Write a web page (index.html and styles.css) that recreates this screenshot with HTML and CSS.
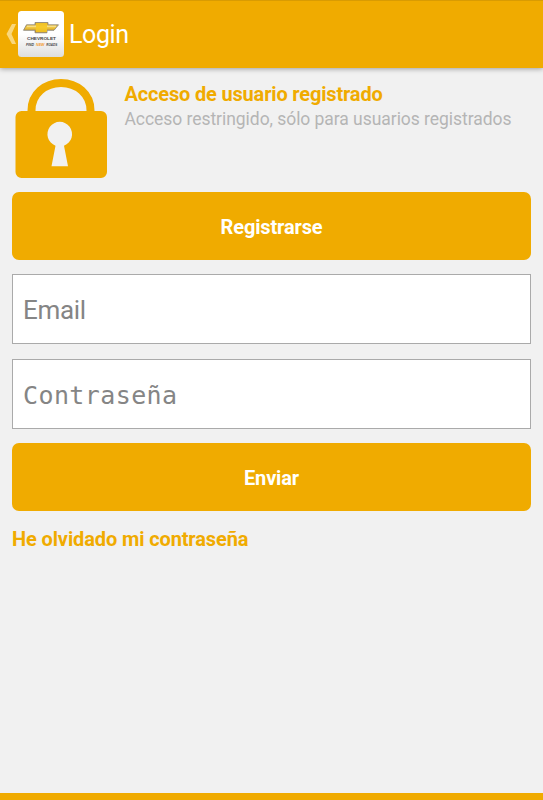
FILE: index.html
```html
<!DOCTYPE html>
<html lang="es">
<head>
<meta charset="utf-8">
<title>Login</title>
<link rel="stylesheet" href="styles.css">
</head>
<body>
<div class="screen">
  <header class="bar">
    <svg class="back" width="10" height="22" viewBox="0 0 10 22"><path d="M6 1h4L5.500 11l4.500 10H6L.5 11z"/></svg>
    <svg class="logo" width="46" height="46" viewBox="0 0 46 46">
      <defs>
        <linearGradient id="tile" x2="0" y2="1"><stop offset=".5" stop-color="#fff"/><stop offset="1" stop-color="#dedede"/></linearGradient>
        <linearGradient id="gold" x2="0" y2="1"><stop stop-color="#c9992c"/><stop offset=".45" stop-color="#f5cd45"/><stop offset="1" stop-color="#bb8519"/></linearGradient>
      </defs>
      <rect width="46" height="46" rx="3.500" fill="url(#tile)"/>
      <path d="M8.500 13.800H17v-2.300h13v2.300h10.500l-4.500 5.500H29v2.500H17v-2.500H5.500z" fill="url(#gold)" stroke="#85827a" stroke-width=".8"/>
      <path d="M18 12h11v9H18z" fill="#f8c924" opacity=".8"/>
      <path d="M9 15.200h9M29 15.200h9" stroke="#faeaa8" stroke-width="1"/>
      <text class="brand" x="23.500" y="28.700" textLength="29" lengthAdjust="spacingAndGlyphs">CHEVROLET</text>
      <text class="slogan" x="12" y="35" textLength="8" lengthAdjust="spacingAndGlyphs">FIND</text>
      <text class="slogan new" x="22.300" y="35" textLength="8.500" lengthAdjust="spacingAndGlyphs">NEW</text>
      <text class="slogan" x="33.700" y="35" textLength="11" lengthAdjust="spacingAndGlyphs">ROADS</text>
    </svg>
    <h1 class="title">Login</h1>
  </header>
  <main class="content">
    <section class="intro">
      <svg class="lock" width="92" height="100" viewBox="0 0 92 100">
        <path class="shackle" d="M16.500 33V31.500C16.500 15 30 4 46 4S75.500 15 75.500 31.500V33"/>
        <path class="lock-body" fill-rule="evenodd" d="M6.500 32H86a6 6 0 0 1 6 6V93a6 6 0 0 1-6 6H6.500a6 6 0 0 1-6-6V38a6 6 0 0 1 6-6zM40.500 66.700L36.500 87.300H53L49 66.700A12.300 12.300 0 1 0 40.500 66.700z"/>
      </svg>
      <div class="intro-text">
        <h2 class="heading">Acceso de usuario registrado</h2>
        <p class="note">Acceso restringido, sólo para usuarios registrados</p>
      </div>
    </section>
    <button class="button register">Registrarse</button>
    <input class="field" type="email" placeholder="Email">
    <input class="field password" type="password" placeholder="Contraseña">
    <button class="button">Enviar</button>
    <a class="forgot">He olvidado mi contraseña</a>
  </main>
  <footer class="foot"></footer>
</div>
</body>
</html>
```
FILE: styles.css
```css
* { box-sizing: border-box; margin: 0; }
body { font-family: Roboto, "Liberation Sans", sans-serif; background: #f1f1f1; }
.screen { height: 800px; display: flex; flex-direction: column; background: #f1f1f1; overflow: hidden; }
.bar {
  height: 68px; flex: none; display: flex; align-items: center; padding: 0 0 1px 6px;
  background: #f0ab00; border-top: 1px solid #d99b02;
  box-shadow: 0 1px 5px rgba(0, 0, 0, .35);
}
.back { fill: #f9d77c; margin-right: 1.5px; }
.logo { margin-right: 5.500px; }
.brand, .slogan { font-family: "Liberation Sans", sans-serif; font-weight: bold; text-anchor: middle; fill: #444; }
.brand { font-size: 4px; }
.slogan { font-size: 4.300px; font-style: italic; }
.new { fill: #f29a2e; }
.title { font-size: 25px; line-height: 30px; padding-top: 2px; font-weight: 400; color: #fff; letter-spacing: -.4px; }
.content { flex: 1; display: flex; flex-direction: column; padding: 11px 12px 0; }
.intro { display: flex; height: 113px; padding-left: 3px; }
.lock { margin-right: 17.500px; }
.shackle { fill: none; stroke: #f0ab00; stroke-width: 8; }
.lock-body { fill: #f0ab00; }
.intro-text { padding-top: 2px; white-space: nowrap; }
.heading { font-size: 20px; line-height: 26px; font-weight: 700; color: #f0ab00; letter-spacing: -.17px; }
.note { font-size: 17.500px; line-height: 25px; color: #b5b5b5; letter-spacing: -.05px; }
.button {
  display: block; width: 100%; height: 68px; flex: none; margin-bottom: 14px; padding: 2px 0 0;
  border: 0; border-radius: 7px; background: #f0ab00; color: #fff;
  font: 700 20px Roboto, "Liberation Sans", sans-serif; letter-spacing: -.15px;
}
.field {
  width: 100%; height: 70px; flex: none; margin-bottom: 15px; padding: 2px 10px 0;
  border: 1px solid #aaa; border-radius: 0; outline: 0; background: #fff;
  font: 400 26px Roboto, "Liberation Sans", sans-serif; letter-spacing: -.3px;
}
.password { font-family: "DejaVu Sans Mono", monospace; font-size: 25px; letter-spacing: .4px; margin-bottom: 14px; }
.field::placeholder { color: #858585; opacity: 1; }
.forgot { font-size: 20px; line-height: 28px; font-weight: 700; color: #f0ab00; letter-spacing: -.12px; }
.foot { height: 7px; flex: none; background: #f0ab00; }
```
